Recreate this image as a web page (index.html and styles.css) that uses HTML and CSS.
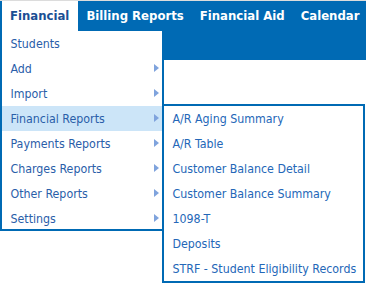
FILE: index.html
```html
<!DOCTYPE html>
<html lang="en">
<head>
  <meta charset="UTF-8">
  <title>Financial Menu</title>
  <link rel="stylesheet" href="styles.css">
</head>
<body>

  <div class="topbar">
    <ul class="nav">
      <li class="nav-item open">
        <a href="#" class="tab">Financial</a>
        <ul class="dropdown">
          <li><a href="#">Students</a></li>
          <li class="has-sub"><a href="#">Add</a></li>
          <li class="has-sub"><a href="#">Import</a></li>
          <li class="has-sub active">
            <a href="#">Financial Reports</a>
            <ul class="submenu">
              <li><a href="#">A/R Aging Summary</a></li>
              <li><a href="#">A/R Table</a></li>
              <li><a href="#">Customer Balance Detail</a></li>
              <li><a href="#">Customer Balance Summary</a></li>
              <li><a href="#">1098-T</a></li>
              <li><a href="#">Deposits</a></li>
              <li><a href="#">STRF - Student Eligibility Records</a></li>
            </ul>
          </li>
          <li class="has-sub"><a href="#">Payments Reports</a></li>
          <li class="has-sub"><a href="#">Charges Reports</a></li>
          <li class="has-sub"><a href="#">Other Reports</a></li>
          <li class="has-sub"><a href="#">Settings</a></li>
        </ul>
      </li>
      <li class="nav-item"><a href="#" class="tab">Billing Reports</a></li>
      <li class="nav-item"><a href="#" class="tab">Financial Aid</a></li>
      <li class="nav-item"><a href="#" class="tab">Calendar</a></li>
    </ul>
  </div>

</body>
</html>
```

FILE: styles.css
```css
html, body {
  height: 100%;
}

body {
  margin: 0;
  min-height: 284px;
  font-family: 'DejaVu Sans Condensed', 'DejaVu Sans', sans-serif;
  background-color: #fff;
}

ul {
  list-style: none;
  margin: 0;
  padding: 0;
}

a {
  text-decoration: none;
}

.topbar {
  border-top: 1px solid #dcdcdc;
  background-color: #006ab4;
  height: 59px;
}

.nav {
  display: flex;
  white-space: nowrap;
}

.nav-item {
  position: relative;
}

.tab {
  display: block;
  height: 30px;
  line-height: 30px;
  padding: 0 8px;
  font-size: 13px;
  font-weight: bold;
  color: #fff;
}

.nav-item.open .tab {
  background-color: #fff;
  color: #1b4f94;
  border-left: 2px solid #006ab4;
  padding: 0 9px 0 8px;
}

.dropdown {
  position: absolute;
  top: 30px;
  left: 0;
  z-index: 2;
  width: 160px;
  background-color: #fff;
  border: 2px solid #006ab4;
  border-top: none;
}

.dropdown li {
  position: relative;
  height: 25px;
}

.dropdown li:last-child {
  height: 23px;
}

.dropdown a {
  display: block;
  height: 25px;
  line-height: 26px;
  padding: 0 8px 0 8.5px;
  font-size: 12.3px;
  color: #2a5ea9;
}

.dropdown .active > a {
  background-color: #cce5f8;
}

.has-sub > a::after {
  content: "";
  position: absolute;
  right: 3px;
  top: 8px;
  border-left: 5px solid #7fa3dd;
  border-top: 4px solid transparent;
  border-bottom: 4px solid transparent;
}

.submenu {
  position: absolute;
  top: -2px;
  left: 160px;
  width: 199px;
  background-color: #fff;
  border: 2px solid #006ab4;
}

.submenu li,
.submenu li:last-child {
  height: 25px;
}

.submenu a {
  color: #2467b8;
}
```
